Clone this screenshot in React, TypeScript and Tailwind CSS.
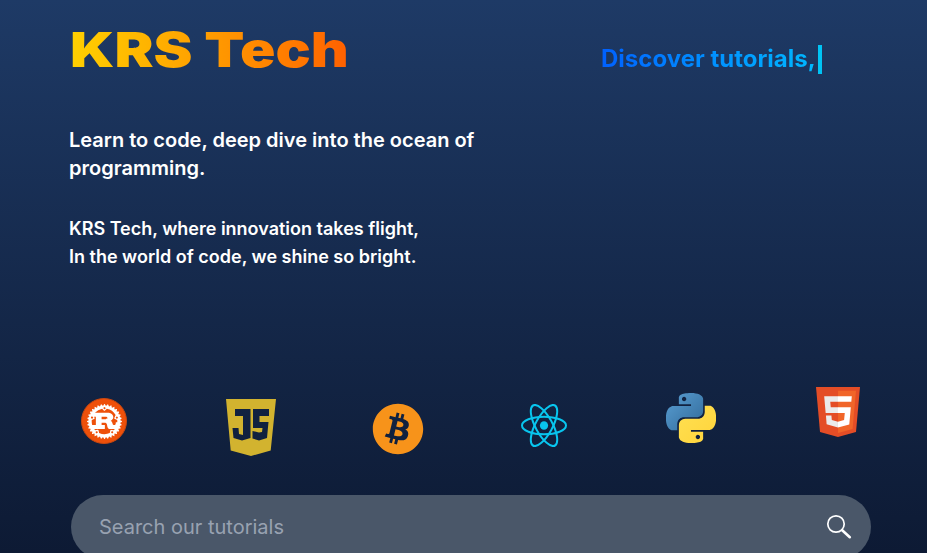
import { FaBitcoin } from 'react-icons/fa';
import { SiRust } from 'react-icons/si';

function RustLogo() {
  return (
    <div className="mt-[11px] flex h-[46px] w-[46px] items-center justify-center rounded-full border border-[#c9470f] bg-[#ee500a]">
      <SiRust className="h-[35px] w-[35px] text-white" />
    </div>
  );
}

function JsLogo() {
  return (
    <svg viewBox="0 0 50 57" className="mt-[12px] h-[57px] w-[50px]">
      <path
        fill="#d2b32f"
        fillRule="evenodd"
        d="M0 0H50L44.7 51.5 25 57 4.7 51.5ZM9 10H24.5V39L16 41.5 7.5 39 6.5 29H12.5L13 35 17 36V17H9ZM27 10H43V17H33.5V23H42.5L41 39 33 41.5 26.5 39.5V32L33 33.5 36 33 36.5 29H27Z"
      />
    </svg>
  );
}

function ReactLogo() {
  return (
    <svg
      viewBox="-11.5 -10.25 23 20.5"
      preserveAspectRatio="none"
      className="mt-[17px] h-[43px] w-[46px]"
      fill="none"
      stroke="#08c5ee"
      strokeWidth="1"
    >
      <circle r="2.05" fill="#08c5ee" stroke="none" />
      <ellipse rx="11" ry="4.2" />
      <ellipse rx="11" ry="4.2" transform="rotate(60)" />
      <ellipse rx="11" ry="4.2" transform="rotate(120)" />
    </svg>
  );
}

function PythonLogo() {
  return (
    <svg viewBox="0 0 24 24" className="mt-[6px] h-[50px] w-[50px]">
      <defs>
        <linearGradient id="pyBlue" x1="0" y1="0" x2="1" y2="1">
          <stop offset="0" stopColor="#5a9fd4" />
          <stop offset="1" stopColor="#306998" />
        </linearGradient>
        <linearGradient id="pyYellow" x1="0" y1="0" x2="1" y2="1">
          <stop offset="0" stopColor="#ffe052" />
          <stop offset="1" stopColor="#ffd43b" />
        </linearGradient>
      </defs>
      <path
        fill="url(#pyBlue)"
        d="M14.25.18l.9.2.73.26.59.3.45.32.34.34.25.34.16.33.1.3.04.26.02.2-.01.13V8.5l-.05.63-.13.55-.21.46-.26.38-.3.31-.33.25-.35.19-.35.14-.33.1-.3.07-.26.04-.21.02H8.77l-.69.05-.59.14-.5.22-.41.27-.33.32-.27.35-.2.36-.15.37-.1.35-.07.32-.04.27-.02.21v3.06H3.17l-.21-.03-.28-.07-.32-.12-.35-.18-.36-.26-.36-.36-.35-.46-.32-.59-.28-.73-.21-.88-.14-1.05-.05-1.23.06-1.22.16-1.04.24-.87.32-.71.36-.57.4-.44.42-.33.42-.24.4-.16.36-.1.32-.05.24-.01h.16l.06.01h8.16v-.83H6.18l-.01-2.75-.02-.37.05-.34.11-.31.17-.28.25-.26.31-.23.38-.2.44-.18.51-.15.58-.12.64-.1.71-.06.77-.04.84-.02 1.27.05zm-6.3 1.98l-.23.33-.08.41.08.41.23.34.33.22.41.09.41-.09.33-.22.23-.34.08-.41-.08-.41-.23-.33-.33-.22-.41-.09-.41.09z"
      />
      <path
        fill="url(#pyYellow)"
        d="M21.04 6.11l.28.06.32.12.35.18.36.27.36.35.35.47.32.59.28.73.21.88.14 1.04.05 1.23-.06 1.23-.16 1.04-.24.86-.32.71-.36.57-.4.45-.42.33-.42.24-.4.16-.36.09-.32.05-.24.02-.16-.01h-8.22v.82h5.84l.01 2.76.02.36-.05.34-.11.31-.17.29-.25.25-.31.24-.38.2-.44.17-.51.15-.58.13-.64.09-.71.07-.77.04-.84.01-1.27-.04-1.07-.14-.9-.2-.73-.25-.59-.3-.45-.33-.34-.34-.25-.34-.16-.33-.1-.3-.04-.25-.02-.2.01-.13v-5.34l.05-.64.13-.54.21-.46.26-.38.3-.32.33-.24.35-.2.35-.14.33-.1.3-.06.26-.04.21-.02.13-.01h5.84l.69-.05.59-.14.5-.21.41-.28.33-.32.27-.35.2-.36.15-.36.1-.35.07-.32.04-.28.02-.21V6.07h2.09l.14.01zm-6.47 14.25l-.23.33-.08.41.08.41.23.33.33.23.41.08.41-.08.33-.23.23-.33.08-.41-.08-.41-.23-.33-.33-.23-.41-.08-.41.08z"
      />
    </svg>
  );
}

function HtmlLogo() {
  return (
    <svg viewBox="30 0 451 512" className="h-[50px] w-[44px]">
      <path fill="#e44d26" d="M71 460L30 0h451l-41 460-185 52" />
      <path fill="#f16529" d="M256 472l149-41 35-394H256" />
      <path fill="#ebebeb" d="M256 208h-75l-5-58h80V94H114l15 171h127zm-1 147l-63-17-4-45h-56l7 89 116 32z" />
      <path fill="#fff" d="M255 208v57h70l-7 74-63 17v59l116-32 16-175zm0-114v56h137l5-56z" />
    </svg>
  );
}

export default function App() {
  return (
    <div className="h-[553px] overflow-hidden bg-gradient-to-b from-[#1e3a66] to-[#0d1a34] font-['Inter',sans-serif]">
      <header className="flex items-start px-[70px] pt-[26px]">
        <h1 className="w-[531px] shrink-0">
          <span className="inline-block origin-left scale-x-[1.22] bg-gradient-to-r from-[#ffd000] to-[#ff6000] bg-clip-text text-[48px] leading-[48px] font-black text-transparent">
            KRS Tech
          </span>
        </h1>
        <div className="mt-[18px] flex items-center">
          <span className="bg-gradient-to-r from-[#0060ff] to-[#00b8ff] bg-clip-text text-2xl leading-[30px] font-bold text-transparent">
            Discover tutorials,
          </span>
          <span className="ml-[2px] h-[29px] w-[4px] bg-[#00c4f5]" />
        </div>
      </header>

      <section className="mt-[52px] pl-[69px] text-white">
        <p className="w-[460px] text-xl leading-[28px] font-semibold">
          Learn to code, deep dive into the ocean of programming.
        </p>
        <p className="mt-[33px] text-lg leading-[28px] font-semibold">
          KRS Tech, where innovation takes flight,
          <br />
          In the world of code, we shine so bright.
        </p>
      </section>

      <div className="mt-[116px] mr-[16px] ml-[31px] grid h-[108px] grid-cols-6 items-start justify-items-center">
        <RustLogo />
        <JsLogo />
        <FaBitcoin className="mt-[16px] h-[52px] w-[52px] text-[#f7931a]" />
        <ReactLogo />
        <PythonLogo />
        <HtmlLogo />
      </div>

      <div className="relative ml-[71px] w-[800px]">
        <input
          placeholder="Search our tutorials"
          className="h-[64px] w-full rounded-full bg-[#4a5769] pr-[64px] pl-[28px] text-xl text-white outline-none placeholder:text-[#98a2b1]"
        />
        <svg viewBox="0 0 26 26" className="absolute top-[19px] right-[19px] h-[26px] w-[26px]" fill="none" stroke="white">
          <circle cx="10" cy="10" r="8.2" strokeWidth="1.7" />
          <path d="M16.2 16.2L23.8 23.2" strokeWidth="2.6" strokeLinecap="round" />
        </svg>
      </div>
    </div>
  );
}
